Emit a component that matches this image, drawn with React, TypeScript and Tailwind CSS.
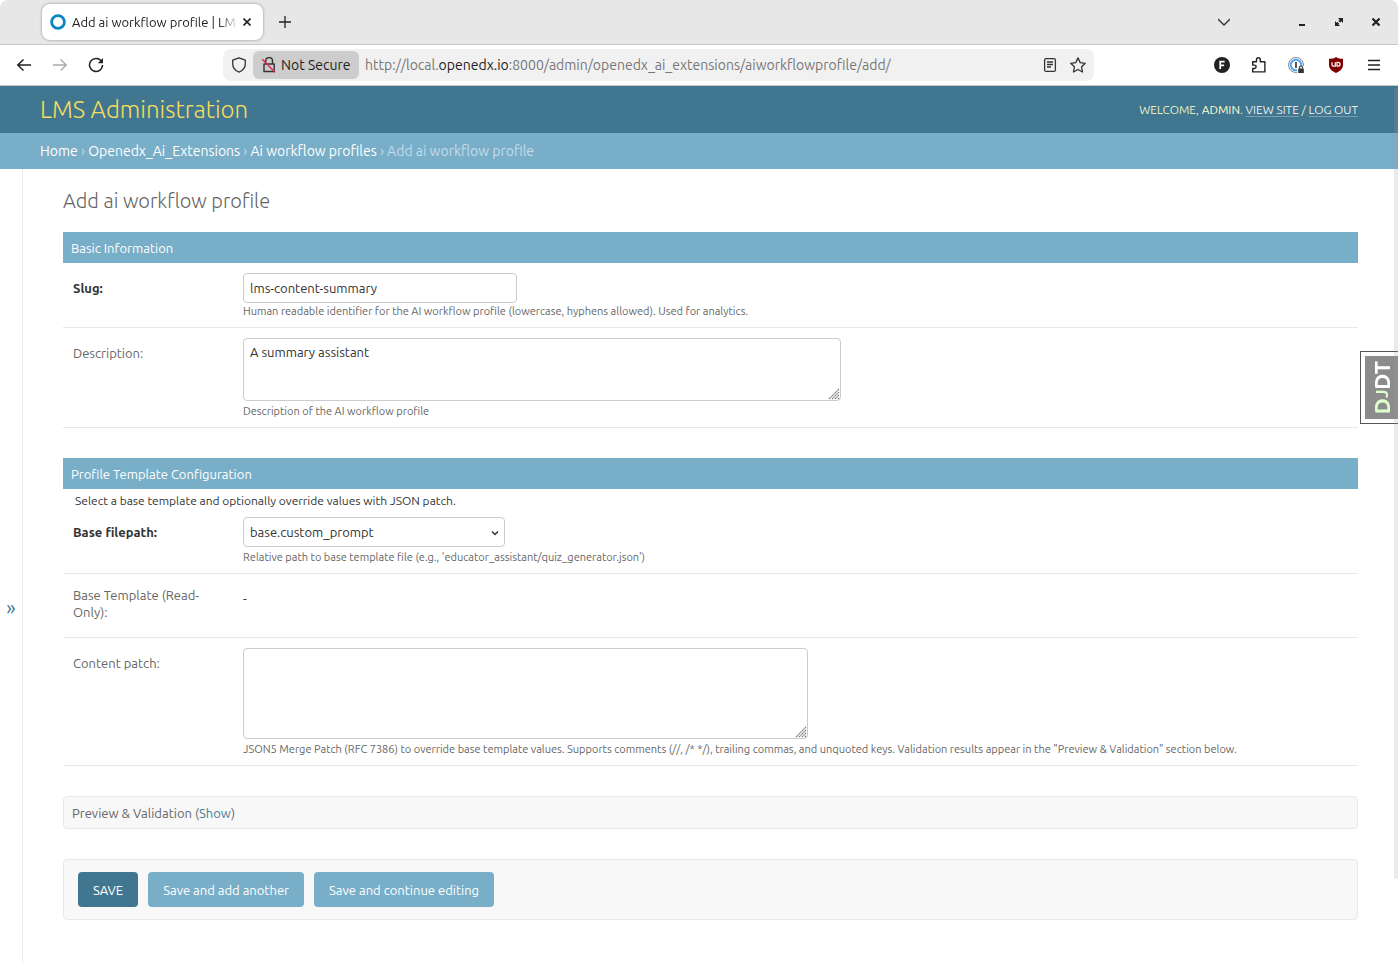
import { useState } from "react";
import type { ReactNode } from "react";

const toolbarButton = "flex h-8 w-8 items-center justify-center rounded hover:bg-black/5";

function ResizeGrip() {
  return (
    <svg className="pointer-events-none absolute right-px bottom-px h-3 w-3" viewBox="0 0 12 12" stroke="#777" strokeWidth="1.1" strokeDasharray="1.6 0.5" aria-hidden="true">
      <path d="M1 11 11 1M4 11 11 4M7 11 11 7M10 11 11 10" fill="none" />
    </svg>
  );
}

function TabStrip() {
  return (
    <div className="flex h-[45px] items-center rounded-t-lg border-b border-[#c8c8c8] bg-[#e7e7e7] pr-[6px] pl-[42px]">
      <div className="flex h-9 w-[221px] items-center rounded-lg bg-white pr-2 pl-2 shadow-[0_0_3px_rgba(0,0,0,0.4)]">
        <svg className="h-4 w-4 shrink-0" viewBox="0 0 16 16" aria-hidden="true">
          <circle cx="8" cy="8" r="6.4" fill="none" stroke="#0b84c4" strokeWidth="2.8" />
        </svg>
        <span className="ml-[6px] min-w-0 flex-1 text-[13px] leading-[17px] whitespace-nowrap text-[#222] [mask-image:linear-gradient(to_left,transparent,black_20px)]">
          Add ai workflow profile | LM
        </span>
        <button aria-label="Close tab" className="flex h-4 w-4 items-center justify-center">
          <svg className="h-2 w-2" viewBox="0 0 8 8" stroke="#222" strokeWidth="1.6" aria-hidden="true">
            <path d="M.5.5l7 7M7.5.5l-7 7" />
          </svg>
        </button>
      </div>
      <button aria-label="New tab" className="ml-[6px] flex h-8 w-8 items-center justify-center">
        <svg className="h-3 w-3" viewBox="0 0 12 12" stroke="#222" strokeWidth="1.3" aria-hidden="true">
          <path d="M6 0v12M0 6h12" />
        </svg>
      </button>
      <button aria-label="List all tabs" className="ml-auto flex h-8 w-8 items-center justify-center">
        <svg className="h-3 w-3" viewBox="0 0 12 12" fill="none" stroke="#333" strokeWidth="1.3" aria-hidden="true">
          <path d="M0 3l6 6 6-6" />
        </svg>
      </button>
      <div className="ml-[46px] flex items-center gap-[5px]">
        <button aria-label="Minimize" className="flex h-8 w-8 items-center justify-center">
          <svg className="h-4 w-4" viewBox="0 0 16 16" aria-hidden="true">
            <path d="M5 10h6v2H5z" fill="#222" />
          </svg>
        </button>
        <button aria-label="Restore" className="flex h-8 w-8 items-center justify-center">
          <svg className="h-4 w-4" viewBox="0 0 16 16" fill="#222" aria-hidden="true">
            <path d="M7 4h5v5l-1.7-1.7-1.2 1.2-1.6-1.6 1.2-1.2zM4 7v5h5l-1.7-1.7 .8-.8-1.6-1.6-.8.8z" />
          </svg>
        </button>
        <button aria-label="Close window" className="flex h-8 w-8 items-center justify-center">
          <svg className="h-4 w-4" viewBox="0 0 16 16" stroke="#222" strokeWidth="2.2" aria-hidden="true">
            <path d="M4.500 4.500l7 7M11.500 4.500l-7 7" />
          </svg>
        </button>
      </div>
    </div>
  );
}

function NavBar() {
  return (
    <div className="flex h-[41px] items-center border-b border-[#c8c8c8] bg-white pr-2 pl-2">
      <button aria-label="Back" className={toolbarButton}>
        <svg className="h-4 w-4" viewBox="0 0 16 16" fill="none" stroke="#222" strokeWidth="1.5" aria-hidden="true">
          <path d="M15 8H1.5M7.5 2.5 1.8 8l5.7 5.5" />
        </svg>
      </button>
      <button aria-label="Forward" disabled className="ml-1 flex h-8 w-8 items-center justify-center">
        <svg className="h-4 w-4" viewBox="0 0 16 16" fill="none" stroke="#aaa" strokeWidth="1.4" aria-hidden="true">
          <path d="M1 8h13.5M8.5 2.5 14.2 8l-5.7 5.5" />
        </svg>
      </button>
      <button aria-label="Reload" className="ml-1 flex h-8 w-8 items-center justify-center">
        <svg className="h-4 w-4" viewBox="0 0 16 16" fill="none" stroke="#222" strokeWidth="1.5" aria-hidden="true">
          <path d="M13.6 4.6A6.5 6.5 0 1 0 14.5 8" />
          <path d="M15 1v5.2H9.8z" fill="#222" stroke="none" />
        </svg>
      </button>

      <div className="ml-[111px] flex h-8 max-w-[871px] min-w-0 flex-1 items-center rounded-lg bg-[#f1f1f1] pr-2 pl-2">
        <svg className="mr-[6px] h-4 w-4 shrink-0" viewBox="0 0 16 16" fill="none" stroke="#333" strokeWidth="1.3" strokeLinejoin="round" aria-hidden="true">
          <path d="M8 .8 14.3 3.2v3.6c0 3.8-2.4 6.8-6.3 8.4C4.1 13.6 1.7 10.6 1.7 6.8V3.2z" />
        </svg>
        <button className="flex h-7 w-[106px] shrink-0 items-center rounded-md bg-[#cdcdcd] pl-2 text-sm whitespace-nowrap text-[#222]">
          <svg className="mr-1 h-4 w-4 shrink-0" viewBox="0 0 16 16" fill="none" stroke="#333" strokeWidth="1.4" aria-hidden="true">
            <path d="M4.7 7V4a3.4 3.4 0 0 1 6.8 0v3M3 7h10.2v7.5H3z" strokeLinejoin="round" />
            <path d="M1.2 2.2 14 15.3" stroke="#e22850" />
          </svg>
          Not Secure
        </button>
        <div className="ml-[6px] min-w-0 flex-1 truncate text-sm text-[#777]">
          http://local.<span className="text-[#222]">openedx.io</span>:8000/admin/openedx_ai_extensions/aiworkflowprofile/add/
        </div>
        <button aria-label="Reader view" className="mr-3 flex h-4 w-4 items-center justify-center">
          <svg className="h-4 w-4" viewBox="0 0 16 16" fill="none" stroke="#333" strokeWidth="1.3" aria-hidden="true">
            <rect x="2.6" y="1.6" width="10.8" height="12.8" rx="1.5" />
            <path d="M5 5h6M5 7.5h6M5 10h4" />
          </svg>
        </button>
        <button aria-label="Bookmark this page" className="flex h-4 w-4 items-center justify-center">
          <svg className="h-4 w-4" viewBox="0 0 16 16" fill="none" stroke="#333" strokeWidth="1.3" strokeLinejoin="round" aria-hidden="true">
            <path d="M8 .9l2.2 4.7 5.1.7-3.7 3.5.9 5.2L8 12.5 3.5 15l.9-5.2L.7 6.3l5.1-.7z" />
          </svg>
        </button>
      </div>

      <div className="ml-auto flex items-center gap-[6px]">
        <button aria-label="Extension F" className={toolbarButton}>
          <svg className="h-4 w-4" viewBox="0 0 16 16" aria-hidden="true">
            <circle cx="8" cy="8" r="8" fill="#222" />
            <path d="M6.2 12V4.7h4.5M6.2 8.4h3.9" fill="none" stroke="#fff" strokeWidth="1.7" />
          </svg>
        </button>
        <button aria-label="Extensions" className={toolbarButton}>
          <svg className="h-4 w-4" viewBox="0 0 16 16" fill="none" stroke="#222" strokeWidth="1.4" strokeLinejoin="round" aria-hidden="true">
            <path d="M.7 4.7h3.8V2.6a1.9 1.9 0 0 1 3.8 0v2.1h4.6v10.2H.7v-3.4h1.7a1.7 1.7 0 0 0 0-3.4H.7z" />
          </svg>
        </button>
        <button aria-label="Password manager" className={toolbarButton}>
          <svg className="h-4 w-5" viewBox="0 0 20 16" fill="none" aria-hidden="true">
            <circle cx="8" cy="8" r="7.5" stroke="#888" />
            <circle cx="8" cy="8" r="5.3" stroke="#52a6f7" strokeWidth="2" />
            <path d="M8 5v6" stroke="#444" strokeWidth="1.8" />
            <path d="M9 9h7v7H9z" fill="#fff" />
            <path d="M10.2 11.5h5.6V16h-5.6z" fill="#333" />
            <path d="M11.5 11.5v-1a1.5 1.5 0 0 1 3 0v1" stroke="#333" strokeWidth="1.2" />
          </svg>
        </button>
        <button aria-label="Content blocker" className={toolbarButton}>
          <svg className="h-4 w-4" viewBox="0 0 16 16" fill="none" aria-hidden="true">
            <path d="M8 0c2 1.500 4.500 1.700 7 1.700v6c0 4-3 6.600-7 8.300-4-1.700-7-4.300-7-8.300v-6C3.500 1.700 6 1.500 8 0z" fill="#800000" />
            <path d="M4 5.300v2.500a1.300 1.300 0 0 0 1.300 1.300h2V5.300M9 5.300h1.200a1.900 1.900 0 0 1 0 3.800H9z" stroke="#fff" strokeWidth="1.2" />
          </svg>
        </button>
        <button aria-label="Open application menu" className={toolbarButton}>
          <svg className="h-4 w-4" viewBox="0 0 16 16" stroke="#222" strokeWidth="1.3" aria-hidden="true">
            <path d="M2 3.5h12M2 8h12M2 12.5h12" />
          </svg>
        </button>
      </div>
    </div>
  );
}

interface FormRowProps {
  label: string;
  htmlFor?: string;
  required?: boolean;
  help?: string;
  helpClass?: string;
  children: ReactNode;
}

function FormRow({ label, htmlFor, required, help, helpClass = "mt-[3px]", children }: FormRowProps) {
  const labelClass = "w-[170px] shrink-0 pr-[30px] leading-[17px]";

  return (
    <div className="flex border-b border-[#e8e8e8] px-[10px] pt-[10px] pb-[9px]">
      {htmlFor ? (
        <label htmlFor={htmlFor} className={`${labelClass} pt-[7px] ${required ? "font-bold text-[#333]" : "text-[#666]"}`}>
          {label}
        </label>
      ) : (
        <div className={`${labelClass} pt-[3px] text-[#666]`}>{label}</div>
      )}
      <div className="min-w-0 flex-1">
        {children}
        {help && <div className={`text-[11px] leading-[14px] text-[#666] ${helpClass}`}>{help}</div>}
      </div>
    </div>
  );
}

export default function App() {
  const [slug, setSlug] = useState("lms-content-summary");
  const [description, setDescription] = useState("A summary assistant");
  const [template, setTemplate] = useState("base.custom_prompt");
  const [patch, setPatch] = useState("");

  const moduleTitle = "bg-[#79aec8] px-2 pt-2 pb-[6px] text-[13px] leading-[17px] text-white";
  const field = "block rounded border border-[#ccc] bg-white px-[6px] text-[13px] text-[#333]";
  const submitButton = "rounded px-[15px] pt-[10px] pb-2 leading-[17px] text-white";

  return (
    <div className="relative flex min-h-screen flex-col bg-white font-['Ubuntu','Open_Sans',sans-serif] text-[13px] text-[#333]">
      <TabStrip />
      <NavBar />

      <header className="flex h-[47px] items-center justify-between bg-[#417690] px-10">
        <a href="#" className="text-2xl font-light text-[#f5dd5d]">LMS Administration</a>
        <div className="text-xs font-light text-[#ffc] uppercase">
          Welcome, <strong className="font-normal">admin</strong>.{" "}
          <a href="#" className="border-b border-white/30 text-white">View site</a> /{" "}
          <a href="#" className="border-b border-white/30 text-white">Log out</a>
        </div>
      </header>

      <nav aria-label="Breadcrumbs" className="flex h-9 items-center bg-[#79aec8] px-10 text-sm text-[#c4dce8]">
        <div>
          <a href="#" className="text-white">Home</a> › <a href="#" className="text-white">Openedx_Ai_Extensions</a> ›{" "}
          <a href="#" className="text-white">Ai workflow profiles</a> › Add ai workflow profile
        </div>
      </nav>

      <div className="flex flex-1">
        <button aria-label="Toggle navigation" className="flex w-[23px] shrink-0 items-center justify-center border-r border-[#eaeaea] pt-[84px] text-xl text-[#417690]">
          »
        </button>

        <main className="min-w-0 flex-1 px-10 pt-5 pb-10">
          <h1 className="mb-5 text-xl leading-[23px] font-light text-[#666]">Add ai workflow profile</h1>

          <form onSubmit={(e) => e.preventDefault()}>
            <section className="mb-[30px]">
              <h2 className={moduleTitle}>Basic Information</h2>
              <FormRow label="Slug:" htmlFor="slug" required help="Human readable identifier for the AI workflow profile (lowercase, hyphens allowed). Used for analytics." helpClass="mt-px">
                <input id="slug" type="text" value={slug} onChange={(e) => setSlug(e.target.value)} className={`${field} h-[30px] w-full max-w-[274px]`} />
              </FormRow>
              <FormRow label="Description:" htmlFor="description" help="Description of the AI workflow profile">
                <div className="relative w-full max-w-[598px]">
                  <textarea id="description" value={description} onChange={(e) => setDescription(e.target.value)} className={`${field} h-[63px] w-full resize-none py-[5px] leading-[17px]`} />
                  <ResizeGrip />
                </div>
              </FormRow>
            </section>

            <section className="mb-[30px]">
              <h2 className={moduleTitle}>Profile Template Configuration</h2>
              <p className="h-[18px] px-3 pt-1 text-xs leading-4">Select a base template and optionally override values with JSON patch.</p>
              <FormRow label="Base filepath:" htmlFor="base-filepath" required help="Relative path to base template file (e.g., 'educator_assistant/quiz_generator.json')">
                <div className="relative w-full max-w-[262px]">
                  <select id="base-filepath" value={template} onChange={(e) => setTemplate(e.target.value)} className={`${field} h-[30px] w-full appearance-none pt-0.5`}>
                    <option>base.custom_prompt</option>
                  </select>
                  <svg className="pointer-events-none absolute top-3 right-[6px] h-2 w-2" viewBox="0 0 8 8" fill="none" stroke="#333" strokeWidth="1.5" aria-hidden="true">
                    <path d="M1 2.5l3 3 3-3" />
                  </svg>
                </div>
              </FormRow>
              <FormRow label="Base Template (Read-Only):">
                <div className="h-11 pt-[6px] leading-[17px]">-</div>
              </FormRow>
              <FormRow label="Content patch:" htmlFor="content-patch" help={'JSON5 Merge Patch (RFC 7386) to override base template values. Supports comments (//, /* */), trailing commas, and unquoted keys. Validation results appear in the "Preview & Validation" section below.'}>
                <div className="relative w-full max-w-[565px]">
                  <textarea id="content-patch" value={patch} onChange={(e) => setPatch(e.target.value)} className={`${field} h-[91px] w-full resize-none py-[5px] leading-[17px]`} />
                  <ResizeGrip />
                </div>
              </FormRow>
            </section>

            <section className="mb-[30px] rounded border border-[#e8e8e8] bg-[#f8f8f8] px-2 pt-2 pb-[6px]">
              <h2 className="leading-[17px] text-[#666]">
                Preview &amp; Validation (<a href="#" className="text-[#447e9b]">Show</a>)
              </h2>
            </section>

            <div className="flex flex-wrap gap-[10px] rounded border border-[#e8e8e8] bg-[#f8f8f8] px-[14px] py-3">
              <button type="submit" className={`${submitButton} bg-[#417690] uppercase`}>Save</button>
              <button type="submit" className={`${submitButton} bg-[#79aec8]`}>Save and add another</button>
              <button type="submit" className={`${submitButton} bg-[#79aec8]`}>Save and continue editing</button>
            </div>
          </form>
        </main>
      </div>

      {/* debug toolbar handle, pinned to the right edge */}
      <button className="absolute top-[351px] right-0 h-[73px] w-[38px] border border-r-0 border-[#555] bg-white p-1 pr-0">
        <span className="flex h-full w-full items-center justify-center bg-[#8c8c8c]">
          <span className="rotate-180 text-[22px] leading-5 font-bold text-white [writing-mode:vertical-rl]">
            <span className="text-[#dfc]">D</span>
            <span className="text-base text-[#dfc]">J</span>
            DT
          </span>
        </span>
      </button>

      <div className="pointer-events-none absolute top-[88px] right-0 h-[791px] w-1 rounded bg-[#999]/20" />
    </div>
  );
}
